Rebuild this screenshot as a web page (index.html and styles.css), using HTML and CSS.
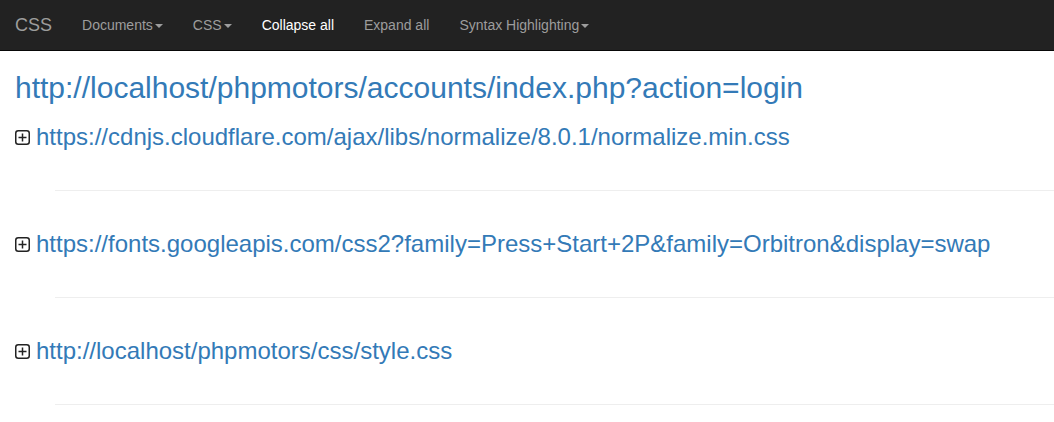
FILE: index.html
```html
<!DOCTYPE html>
<html lang="en">
<head>
<meta charset="utf-8">
<title>CSS</title>
<link rel="stylesheet" href="styles.css">
</head>
<body>
<nav class="navbar">
  <a class="brand" href="#">CSS</a>
  <ul class="nav">
    <li><a href="#">Documents<span class="caret"></span></a></li>
    <li><a href="#">CSS<span class="caret"></span></a></li>
    <li><a class="active" href="#">Collapse all</a></li>
    <li><a href="#">Expand all</a></li>
    <li><a href="#">Syntax Highlighting<span class="caret"></span></a></li>
  </ul>
</nav>
<main class="container">
  <h2 class="title"><a href="#">http://localhost/phpmotors/accounts/index.php?action=login</a></h2>
  <section class="sheet">
    <h3 class="sheet-title"><svg class="toggle" width="15" height="15" viewBox="0 0 15 15"><rect x="0.75" y="0.75" width="13.5" height="13.5" rx="2.5" fill="#fff" stroke="#222" stroke-width="1.5"/><path d="M7.5 3.5v8M3.5 7.5h8" stroke="#222" stroke-width="1.5"/></svg><a href="#">https://cdnjs.cloudflare.com/ajax/libs/normalize/8.0.1/normalize.min.css</a></h3>
    <hr class="rule">
  </section>
  <section class="sheet">
    <h3 class="sheet-title"><svg class="toggle" width="15" height="15" viewBox="0 0 15 15"><rect x="0.75" y="0.75" width="13.5" height="13.5" rx="2.5" fill="#fff" stroke="#222" stroke-width="1.5"/><path d="M7.5 3.5v8M3.5 7.5h8" stroke="#222" stroke-width="1.5"/></svg><a href="#">https://fonts.googleapis.com/css2?family=Press+Start+2P&amp;family=Orbitron&amp;display=swap</a></h3>
    <hr class="rule">
  </section>
  <section class="sheet">
    <h3 class="sheet-title"><svg class="toggle" width="15" height="15" viewBox="0 0 15 15"><rect x="0.75" y="0.75" width="13.5" height="13.5" rx="2.5" fill="#fff" stroke="#222" stroke-width="1.5"/><path d="M7.5 3.5v8M3.5 7.5h8" stroke="#222" stroke-width="1.5"/></svg><a href="#">http://localhost/phpmotors/css/style.css</a></h3>
    <hr class="rule">
  </section>
</main>
</body>
</html>
```
FILE: styles.css
```css
* { box-sizing: border-box; }
html, body { margin: 0; padding: 0; }
body {
  font-family: "Liberation Sans", Arial, sans-serif;
  font-size: 14px;
  line-height: 1.42857;
  color: #333;
  background: #fff;
  overflow: hidden;
}
a { color: #337ab7; text-decoration: none; }

.navbar {
  display: flex;
  align-items: stretch;
  height: 51px;
  background: #222;
  border-bottom: 1px solid #080808;
}
.brand {
  padding: 15px;
  font-size: 18px;
  line-height: 20px;
  color: #9d9d9d;
}
.nav {
  display: flex;
  list-style: none;
  margin: 0;
  padding: 0;
}
.nav a {
  display: block;
  padding: 15px;
  line-height: 20px;
  color: #9d9d9d;
}
.nav a.active { color: #fff; }
.caret {
  display: inline-block;
  width: 0;
  height: 0;
  margin-left: 2px;
  vertical-align: middle;
  border-top: 4px solid;
  border-left: 4px solid transparent;
  border-right: 4px solid transparent;
}

.container { padding: 0 0 0 15px; }
.title {
  margin: 20px 0 20px;
  font-size: 30px;
  font-weight: 500;
  line-height: 33px;
}
.sheet-title {
  display: flex;
  align-items: center;
  margin: 0;
  font-size: 24px;
  font-weight: 500;
  line-height: 26px;
}
.toggle { flex: none; margin-right: 6px; }
.rule {
  margin: 40px 0 40px 40px;
  border: 0;
  border-top: 1px solid #eee;
  height: 0;
}
```
